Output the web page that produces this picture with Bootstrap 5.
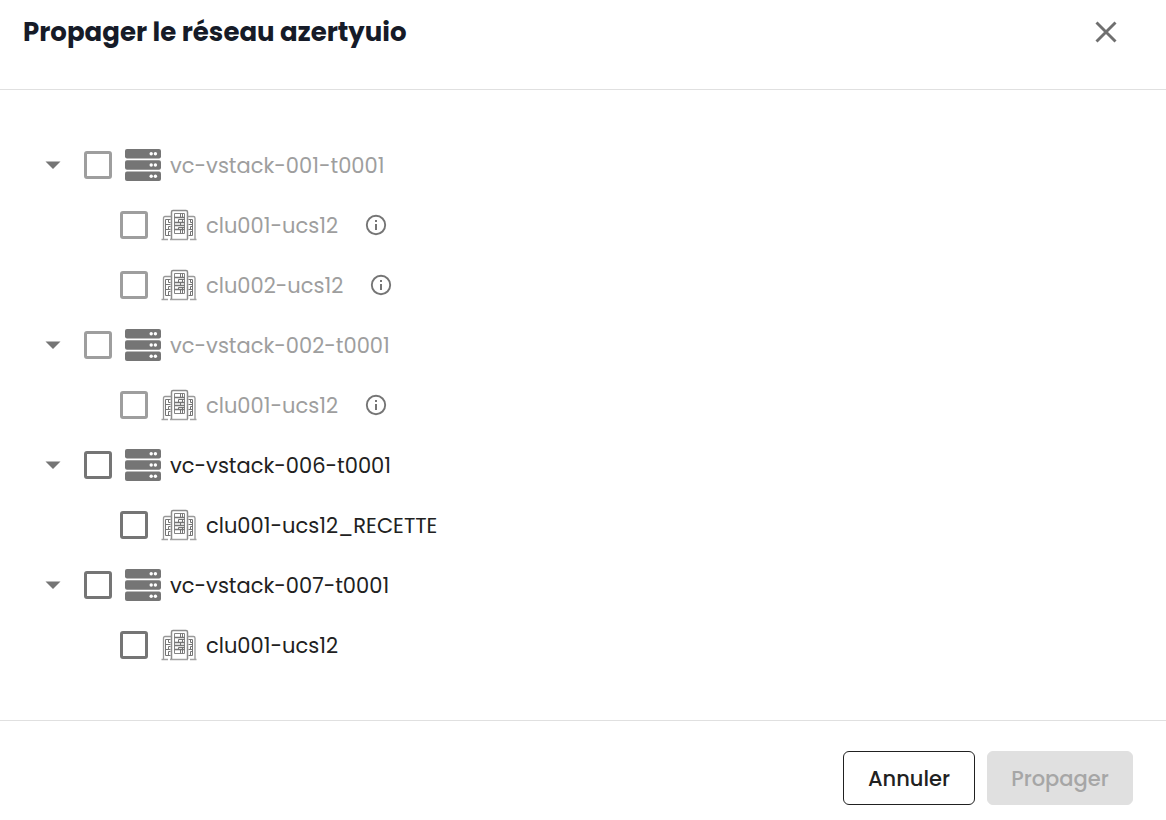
<!DOCTYPE html>
<html lang="fr">
<head>
<meta charset="utf-8">
<meta name="viewport" content="width=device-width, initial-scale=1">
<title>Propager le réseau azertyuio</title>
<link href="https://cdn.jsdelivr.net/npm/bootstrap@5.3.0/dist/css/bootstrap.min.css" rel="stylesheet">
<style>
  body { font-family: Poppins, Inter, sans-serif; color: #212121; background: #fff; }
  .dialog-head { height: 90px; padding: 14px 44px 0 23px; border-bottom: 1px solid #e0e0e0; }
  .dialog-title { font-size: 26px; line-height: 36px; font-weight: 700; color: #161b28; }
  .close-btn { width: 32px; height: 36px; color: #6f6f6f; }
  .dialog-body { padding: 45px 41px; }
  .tree-row { height: 60px; }
  .tree-row label { font-size: 21px; line-height: 32px; padding-top: 2px; }
  .tree-row.is-off label { color: #9e9e9e; }
  .tree-toggle { width: 24px; height: 24px; margin-right: 19px; color: #757575; }
  .tree-children { padding-left: 79px; }
  .tree-check.form-check-input { width: 28px; height: 28px; margin: 0 13px 0 0; border: 3px solid #757575; border-radius: 3px; }
  .tree-check.form-check-input:disabled { border-color: #9e9e9e; opacity: 1; }
  .node-icon { width: 36px; height: 36px; margin-right: 9px; color: #757575; }
  .info-icon { width: 22px; height: 22px; color: #757575; margin-left: 27px; }
  .dialog-foot { border-top: 1px solid #e0e0e0; padding: 30px 33px 15px; gap: 12px; }
  .dialog-btn { height: 54px; font-size: 21px; line-height: 32px; font-weight: 500; border-radius: 6px; padding: 2px 23px 0; }
  .btn-cancel { border: 1px solid #212121; color: #212121; min-width: 132px; }
  .btn-send.btn:disabled { background: #e0e0e0; border-color: #e0e0e0; color: #a6a6a6; opacity: 1; min-width: 146px; }
</style>
</head>
<body>
<svg class="d-none" aria-hidden="true">
  <symbol id="caret" viewBox="0 0 24 24"><path fill="currentColor" d="M4.5 8.5h15L12 16z"/></symbol>
  <symbol id="rack" viewBox="0 0 36 36">
    <g fill="currentColor"><rect y="2" width="36" height="9.6" rx="2"/><rect y="13.2" width="36" height="9.6" rx="2"/><rect y="24.4" width="36" height="9.6" rx="2"/></g>
    <g fill="#fff"><circle cx="26.2" cy="6.8" r="1.7"/><circle cx="30.4" cy="6.8" r="1.7"/><circle cx="26.2" cy="18" r="1.7"/><circle cx="30.4" cy="18" r="1.7"/><circle cx="26.2" cy="29.2" r="1.7"/><circle cx="30.4" cy="29.2" r="1.7"/></g>
  </symbol>
  <symbol id="cluster" viewBox="0 0 36 36">
    <g fill="none" stroke="currentColor">
      <path d="M.5 32.5H7M9 32.5h18M29 32.5h6.5" stroke="#a2a2a2" stroke-width="1.500"/>
      <path d="M10.500 32V5q0-1.500 1.500-1.500h13q1.500 0 1.500 1.500V32" stroke="#8c8c8c" stroke-width="1.500"/>
      <path d="M10.500 9.500H4q-1.500 0-1.500 1.500V32M26.500 9.500h6q1.500 0 1.500 1.500V32" stroke="#999" stroke-width="1.300"/>
      <path d="M13.500 6.500h10v20h-10z" stroke="#858585"/>
      <path d="M13.500 10.500h10M13.500 15.500h10M13.500 18.500h10M13.500 22.500h10" stroke-width="1.300"/>
      <path d="M19.500 6.500v4M21.500 6.500v4M17.500 12.500h6M17.500 12.500v3M21.500 12.500v3M19.500 15.500v3M17.500 20.500h6M17.500 20.500v2M21.500 20.500v2M19.500 22.500v4M21.500 22.500v4"/>
      <path d="M9.500 12.500h-5v16h5M4.500 17.500h5M4.500 22.500h5M7.500 12.500v3h2M7.500 19.500v3M7.500 24.500v4M7.500 19.500h2M7.500 24.500h2"/>
      <path d="M27.500 12.500h4v16h-4M27.500 17.500h4M27.500 22.500h4M29.500 12.500v3h2M29.500 19.500v3M29.500 24.500v4M29.500 19.500h2M29.500 24.500h2"/>
    </g>
  </symbol>
  <symbol id="info" viewBox="0 0 22 22"><circle cx="11" cy="11" r="9.200" fill="none" stroke="currentColor" stroke-width="1.900"/><path fill="currentColor" d="M10 10h2v6h-2zM10 6h2v2h-2z"/></symbol>
</svg>

<div role="dialog" aria-labelledby="dlgTitle">
  <header class="dialog-head d-flex align-items-start justify-content-between">
    <h1 class="dialog-title m-0" id="dlgTitle">Propager le réseau azertyuio</h1>
    <button type="button" class="close-btn btn p-0 border-0 d-flex align-items-center justify-content-center" aria-label="Fermer">
      <svg width="22" height="22" viewBox="0 0 22 22"><path d="M1.500 1.500l19 19m0-19l-19 19" stroke="currentColor" stroke-width="2.900" fill="none"/></svg>
    </button>
  </header>

  <main class="dialog-body">
    <ul class="list-unstyled m-0">
      <li>
        <div class="tree-row is-off d-flex align-items-center">
          <button type="button" class="tree-toggle btn p-0 border-0 d-flex" aria-label="Replier"><svg width="24" height="24"><use href="#caret"/></svg></button>
          <input class="tree-check form-check-input" type="checkbox" id="v1" disabled>
          <svg class="node-icon"><use href="#rack"/></svg>
          <label for="v1">vc-vstack-001-t0001</label>
        </div>
        <ul class="tree-children list-unstyled">
          <li class="tree-row is-off d-flex align-items-center">
            <input class="tree-check form-check-input" type="checkbox" id="v1c1" disabled>
            <svg class="node-icon"><use href="#cluster"/></svg>
            <label for="v1c1">clu001-ucs12</label>
            <svg class="info-icon"><use href="#info"/></svg>
          </li>
          <li class="tree-row is-off d-flex align-items-center">
            <input class="tree-check form-check-input" type="checkbox" id="v1c2" disabled>
            <svg class="node-icon"><use href="#cluster"/></svg>
            <label for="v1c2">clu002-ucs12</label>
            <svg class="info-icon"><use href="#info"/></svg>
          </li>
        </ul>
      </li>
      <li>
        <div class="tree-row is-off d-flex align-items-center">
          <button type="button" class="tree-toggle btn p-0 border-0 d-flex" aria-label="Replier"><svg width="24" height="24"><use href="#caret"/></svg></button>
          <input class="tree-check form-check-input" type="checkbox" id="v2" disabled>
          <svg class="node-icon"><use href="#rack"/></svg>
          <label for="v2">vc-vstack-002-t0001</label>
        </div>
        <ul class="tree-children list-unstyled">
          <li class="tree-row is-off d-flex align-items-center">
            <input class="tree-check form-check-input" type="checkbox" id="v2c1" disabled>
            <svg class="node-icon"><use href="#cluster"/></svg>
            <label for="v2c1">clu001-ucs12</label>
            <svg class="info-icon"><use href="#info"/></svg>
          </li>
        </ul>
      </li>
      <li>
        <div class="tree-row d-flex align-items-center">
          <button type="button" class="tree-toggle btn p-0 border-0 d-flex" aria-label="Replier"><svg width="24" height="24"><use href="#caret"/></svg></button>
          <input class="tree-check form-check-input" type="checkbox" id="v6">
          <svg class="node-icon"><use href="#rack"/></svg>
          <label for="v6">vc-vstack-006-t0001</label>
        </div>
        <ul class="tree-children list-unstyled">
          <li class="tree-row d-flex align-items-center">
            <input class="tree-check form-check-input" type="checkbox" id="v6c1">
            <svg class="node-icon"><use href="#cluster"/></svg>
            <label for="v6c1">clu001-ucs12_RECETTE</label>
          </li>
        </ul>
      </li>
      <li>
        <div class="tree-row d-flex align-items-center">
          <button type="button" class="tree-toggle btn p-0 border-0 d-flex" aria-label="Replier"><svg width="24" height="24"><use href="#caret"/></svg></button>
          <input class="tree-check form-check-input" type="checkbox" id="v7">
          <svg class="node-icon"><use href="#rack"/></svg>
          <label for="v7">vc-vstack-007-t0001</label>
        </div>
        <ul class="tree-children list-unstyled">
          <li class="tree-row d-flex align-items-center">
            <input class="tree-check form-check-input" type="checkbox" id="v7c1">
            <svg class="node-icon"><use href="#cluster"/></svg>
            <label for="v7c1">clu001-ucs12</label>
          </li>
        </ul>
      </li>
    </ul>
  </main>

  <footer class="dialog-foot d-flex justify-content-end">
    <button type="button" class="dialog-btn btn-cancel btn">Annuler</button>
    <button type="button" class="dialog-btn btn-send btn" disabled>Propager</button>
  </footer>
</div>
<script src="https://cdn.jsdelivr.net/npm/bootstrap@5.3.0/dist/js/bootstrap.bundle.min.js"></script>
</body>
</html>
